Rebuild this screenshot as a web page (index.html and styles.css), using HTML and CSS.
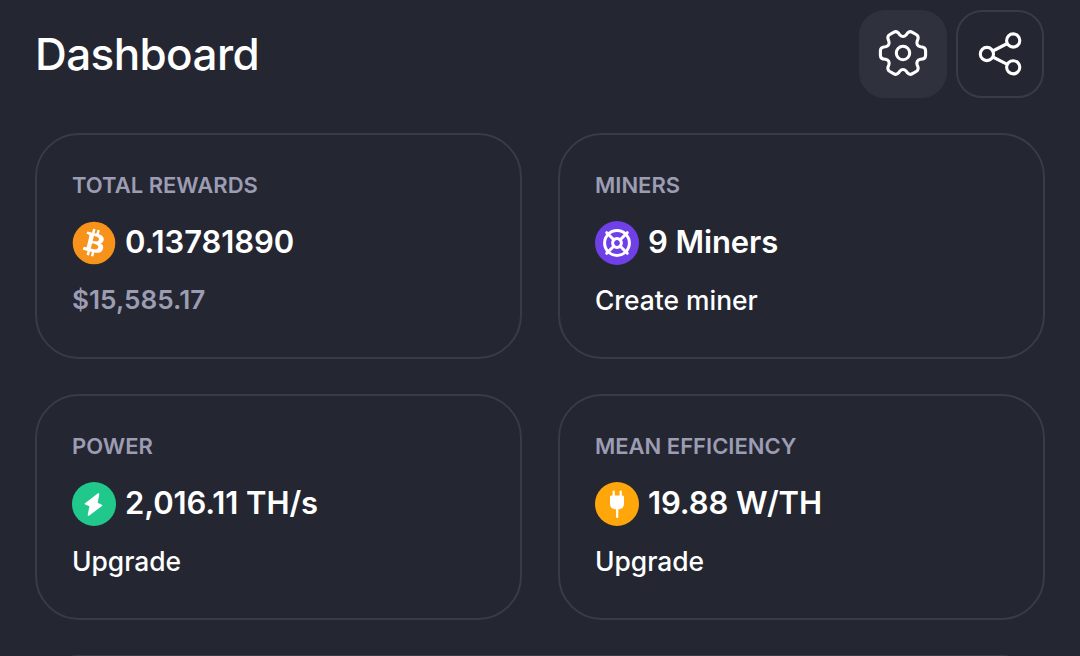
FILE: index.html
```html
<!DOCTYPE html>
<html lang="en">
<head>
  <meta charset="UTF-8" />
  <meta name="viewport" content="width=device-width, initial-scale=1.0">
  <title>Dashboard</title>
  <link rel="stylesheet" href="styles.css">
</head>
<body>
  <header class="header">
    <h1>Dashboard</h1>
    <div class="actions">
      <button class="icon-btn filled" aria-label="Settings">
        <svg class="gear" width="52" height="52" viewBox="-26 -26 52 52">
          <path d="M17.5-6.3C20.5-6.2 22.6-5 22.6-2.2L22.6 2.2C22.6 5 20.5 6.2 17.5 6.3Q12.8 7.4 14.2 12
            C15.6 14.7 15.6 17.1 13.2 18.5L9.4 20.7C7 22.1 4.9 20.9 3.3 18.3Q0 14.8-3.3 18.3
            C-4.9 20.9-7 22.1-9.4 20.7L-13.2 18.5C-15.6 17.1-15.6 14.7-14.2 12Q-12.8 7.4-17.5 6.3
            C-20.5 6.2-22.6 5-22.6 2.2L-22.6-2.2C-22.6-5-20.5-6.2-17.5-6.3Q-12.8-7.4-14.2-12
            C-15.6-14.7-15.6-17.1-13.2-18.5L-9.4-20.7C-7-22.1-4.9-20.9-3.3-18.3Q0-14.8 3.3-18.3
            C4.9-20.9 7-22.1 9.4-20.7L13.2-18.5C15.6-17.1 15.6-14.7 14.2-12Q12.8-7.4 17.5-6.3Z" />
          <circle r="6.7" />
        </svg>
      </button>
      <button class="icon-btn" aria-label="Share">
        <svg width="52" height="52" viewBox="-26 -26 52 52">
          <circle cx="-13.1" cy="0" r="6.6" />
          <circle cx="13.2" cy="-13.5" r="6.6" />
          <circle cx="13.2" cy="13.3" r="6.6" />
          <path d="M-7.2-3L7.3-10.5M-7.2 3L7.3 10.3" />
        </svg>
      </button>
    </div>
  </header>

  <main class="grid">
    <section class="card">
      <h2>Total rewards</h2>
      <div class="value">
        <svg width="44" height="44" viewBox="0 0 64 64">
          <circle cx="32" cy="32" r="31" fill="#f7931a" />
          <path fill="#fff" d="m46.103,27.444c0.637-4.258-2.605-6.547-7.038-8.074l1.438-5.768-3.511-0.875-1.4,5.616c-0.923-0.23-1.871-0.447-2.813-0.662l1.41-5.653-3.509-0.875-1.439,5.766c-0.764-0.174-1.514-0.346-2.242-0.527l0.004-0.018-4.842-1.209-0.934,3.75s2.605,0.597,2.55,0.634c1.422,0.355,1.679,1.296,1.636,2.042l-1.638,6.571c0.098,0.025,0.225,0.061,0.365,0.117-0.117-0.029-0.242-0.061-0.371-0.092l-2.296,9.205c-0.174,0.432-0.615,1.08-1.609,0.834,0.035,0.051-2.552-0.637-2.552-0.637l-1.743,4.019,4.569,1.139c0.85,0.213,1.683,0.436,2.503,0.646l-1.453,5.834,3.507,0.875,1.439-5.772c0.958,0.26,1.888,0.5,2.798,0.726l-1.434,5.745,3.511,0.875,1.453-5.823c5.987,1.133,10.489,0.676,12.384-4.739,1.527-4.36-0.076-6.875-3.226-8.515,2.294-0.529,4.022-2.038,4.483-5.155zm-8.022,11.249c-1.085,4.36-8.426,2.003-10.806,1.412l1.928-7.729c2.38,0.594,10.012,1.77,8.878,6.317zm1.086-11.312c-0.99,3.966-7.1,1.951-9.082,1.457l1.748-7.01c1.982,0.494,8.365,1.416,7.334,5.553z" />
        </svg>
        <span>0.13781890</span>
      </div>
      <p class="muted">$15,585.17</p>
    </section>

    <section class="card">
      <h2>Miners</h2>
      <div class="value">
        <svg width="44" height="44" viewBox="-22 -22 44 44">
          <circle r="22" fill="#6f3fe8" />
          <g fill="none" stroke="#fff" stroke-width="3" stroke-linecap="round">
            <circle r="12.4" />
            <circle r="4.4" />
            <path d="M-10.3-10.3L-3.5-3.5M10.3-10.3L3.5-3.5M-10.3 10.3L-3.5 3.5M10.3 10.3L3.5 3.5" />
          </g>
        </svg>
        <span>9 Miners</span>
      </div>
      <p>Create miner</p>
    </section>

    <section class="card">
      <h2>Power</h2>
      <div class="value">
        <svg width="44" height="44" viewBox="0 0 44 44">
          <circle cx="22" cy="22" r="22" fill="#20c98b" />
          <path fill="#fff" stroke="#fff" stroke-width="1.6" stroke-linejoin="round" d="M26.5 12L13.5 21.8L18.3 23.8L16.5 33L29.5 23.4L24.8 21.2Z" />
        </svg>
        <span>2,016.11 TH/s</span>
      </div>
      <p>Upgrade</p>
    </section>

    <section class="card">
      <h2>Mean efficiency</h2>
      <div class="value">
        <svg width="44" height="44" viewBox="0 0 44 44">
          <circle cx="22" cy="22" r="22" fill="#fea60a" />
          <path fill="#fff" d="M15 15Q15 13.5 16.5 13.5H27.5Q29 13.5 29 15V21.5Q29 27.2 23.5 27.2H20.5Q15 27.2 15 21.5Z" />
          <path stroke="#fff" stroke-width="2.2" stroke-linecap="round" d="M18.7 9.5V14M25.7 9.5V14M22.2 27V35" />
        </svg>
        <span>19.88 W/TH</span>
      </div>
      <p>Upgrade</p>
    </section>

    <section class="card wide"></section>
  </main>
</body>
</html>
```

FILE: styles.css
```css
* {
  box-sizing: border-box;
}
html, body {
  margin: 0;
  padding: 0;
  height: 656px;
  overflow: hidden;
}
body {
  background-color: #242632;
  color: #ffffff;
  font-family: Inter, sans-serif;
  padding: 10px 35px 0;
}
h1, h2, p {
  margin: 0;
}
.header {
  display: flex;
  justify-content: space-between;
  align-items: center;
  height: 88px;
  margin-bottom: 35px;
  padding-right: 1px;
}
h1 {
  font-size: 44px;
  font-weight: 550;
  line-height: 52px;
  letter-spacing: -0.6px;
}
.actions {
  display: flex;
  gap: 9px;
}
.icon-btn {
  display: flex;
  align-items: center;
  justify-content: center;
  width: 88px;
  height: 88px;
  padding: 0;
  background: none;
  border: 2px solid #393b47;
  border-radius: 26px;
}
.icon-btn.filled {
  background-color: #2f313d;
  border-color: #2f313d;
}
.icon-btn svg {
  fill: none;
  stroke: #ffffff;
  stroke-width: 3.1;
}
.icon-btn .gear {
  margin-bottom: 2px;
}
.grid {
  display: grid;
  grid-template-columns: 1fr 1fr;
  grid-template-rows: 226px 226px 1px;
  gap: 35px 36px;
  height: 523px;
  overflow: hidden;
}
.card {
  border: 2px solid #393b47;
  border-radius: 44px;
  padding: 35px;
}
/* only the top edge of the next card is in view */
.wide {
  grid-column: span 2;
  height: 100px;
}
h2 {
  font-size: 22px;
  font-weight: 600;
  line-height: 30px;
  color: #9c9db3;
  text-transform: uppercase;
}
.value {
  display: flex;
  align-items: center;
  gap: 9px;
  height: 44px;
  margin: 21px 0 19px;
  font-size: 31px;
  font-weight: 600;
  letter-spacing: -0.1px;
}
.value span {
  margin-bottom: 3px;
}
p {
  font-size: 26.4px;
  font-weight: 500;
  line-height: 32px;
}
.muted {
  color: #9c9db3;
  font-size: 26.2px;
  font-weight: 600;
}
```
